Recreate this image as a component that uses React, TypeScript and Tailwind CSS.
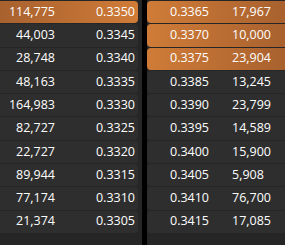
const BIDS = [
  { qty: "114,775", price: "0.3350", hot: true },
  { qty: "44,003", price: "0.3345" },
  { qty: "28,748", price: "0.3340" },
  { qty: "48,163", price: "0.3335" },
  { qty: "164,983", price: "0.3330" },
  { qty: "82,727", price: "0.3325" },
  { qty: "22,727", price: "0.3320" },
  { qty: "89,944", price: "0.3315" },
  { qty: "77,174", price: "0.3310" },
  { qty: "21,374", price: "0.3305" },
];

const ASKS = [
  { price: "0.3365", qty: "17,967", hot: true },
  { price: "0.3370", qty: "10,000", hot: true },
  { price: "0.3375", qty: "23,904", hot: true },
  { price: "0.3385", qty: "13,245" },
  { price: "0.3390", qty: "23,799" },
  { price: "0.3395", qty: "14,589" },
  { price: "0.3400", qty: "15,900" },
  { price: "0.3405", qty: "5,908" },
  { price: "0.3410", qty: "76,700" },
  { price: "0.3415", qty: "17,085" },
];

export default function App() {
  return (
    <div
      className="flex h-[245px] w-[285px] overflow-hidden bg-[#262626] text-[12.5px] text-white"
      style={{ fontFamily: '"Open Sans", "Noto Sans", sans-serif' }}
    >
      {/* bids */}
      <div className="flex w-[142px] flex-col gap-px pr-[4px] pt-px">
        {BIDS.map((r) => (
          <div
            key={r.price}
            className={`flex h-[22.3px] items-center rounded-r-[4px] ${
              r.hot ? "bg-gradient-to-r from-[#a8612e] to-[#d07c38]" : "bg-[#2e2e2e]"
            }`}
          >
            <span className="w-[55px] text-right">{r.qty}</span>
            <span className="w-[80px] text-right">{r.price}</span>
          </div>
        ))}
      </div>

      <div className="w-[5px] bg-black" />

      {/* asks */}
      <div className="flex flex-1 flex-col gap-px pt-px">
        {ASKS.map((r) => (
          <div
            key={r.price}
            className={`flex h-[22.3px] items-center rounded-l-[4px] ${
              r.hot ? "bg-gradient-to-r from-[#d07c38] to-[#a8612e]" : "bg-[#2e2e2e]"
            }`}
          >
            <span className="ml-[23px] w-[62px]">{r.price}</span>
            <span>{r.qty}</span>
          </div>
        ))}
      </div>
    </div>
  );
}
